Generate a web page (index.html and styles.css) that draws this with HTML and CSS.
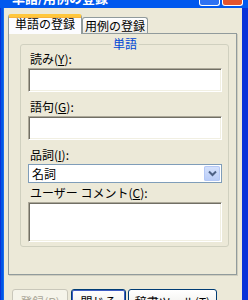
FILE: index.html
```html
<!DOCTYPE html>
<html lang="ja">
<head>
  <meta charset="UTF-8" />
  <title>単語/用例の登録</title>
  <link rel="stylesheet" href="styles.css">
</head>
<body>
  <div class="window">
    <div class="titlebar">
      <span class="title">単語/用例の登録</span>
      <span class="tb-btns"><span class="tb-btn"></span><span class="tb-btn tb-close"></span></span>
    </div>
    <div class="frame">
      <div class="client">
        <div class="tabs">
          <div class="tab active">単語の登録</div>
          <div class="tab">用例の登録</div>
        </div>
        <div class="panel">
          <fieldset class="group">
            <legend>単語</legend>
            <label class="first">読み(<u>Y</u>):</label>
            <div class="edit"></div>
            <label>語句(<u>G</u>):</label>
            <div class="edit"></div>
            <label>品詞(<u>I</u>):</label>
            <div class="combo">
              <span class="combo-text">名詞</span>
              <span class="combo-btn">
                <svg width="9" height="7" viewBox="0 0 9 7"><path d="M1 1.5 L4.5 5 L8 1.5" fill="none" stroke="#4D6185" stroke-width="2"/></svg>
              </span>
            </div>
            <label class="tight">ユーザー コメント(<u>C</u>):</label>
            <div class="edit memo"></div>
          </fieldset>
        </div>
        <div class="buttons">
          <button class="btn" disabled>登録(R)</button>
          <button class="btn default">閉じる</button>
          <button class="btn wide">辞書ツール(T)</button>
        </div>
      </div>
    </div>
  </div>
</body>
</html>
```

FILE: styles.css
```css
body {
  margin: 0;
  font-family: "Noto Sans CJK JP", sans-serif;
  font-size: 12px;
  color: #000;
}
.window { width: 248px; height: 300px; overflow: hidden; display: flex; flex-direction: column; background: #0055E5; }
.titlebar { height: 8px; flex: none; display: flex; justify-content: space-between; overflow: hidden; background: #0058EE; }
.title { color: #fff; font-weight: bold; font-size: 13px; line-height: 13px; margin-top: -9px; padding-left: 12px; white-space: nowrap; }
.tb-btns { display: flex; gap: 2px; padding-right: 5px; }
.tb-btn { width: 19px; height: 5px; border: 1px solid #fff; border-top: none; border-radius: 0 0 3px 3px; background: #2F72F2; }
.tb-close { background: #E2542F; }

.frame { flex: 1; display: flex; padding: 0 6px 0 4px; background: linear-gradient(to right, #0831D9 0, #0831D9 1px, #0055E5 1px, #0055E5 3px, #166AEE 3px, #166AEE 4px, #0055E5 4px, #0055E5 242px, #0831D9 242px); }
.client { flex: 1; background: #ECE9D8; padding: 6px 3px 0 4px; }

.tabs { display: flex; align-items: flex-end; height: 19px; position: relative; z-index: 1; }
.tab { box-sizing: border-box; text-align: center; white-space: nowrap; border: 1px solid #919B9C; border-bottom: none; border-radius: 3px 3px 0 0; }
.tab.active { width: 74px; height: 20px; margin-bottom: -1px; border-top: 3px solid #FFC73C; box-shadow: inset 0 1px #F8B33A; background: #FCFCFE; line-height: 13px; padding-top: 0; }
.tab:not(.active) { width: 66px; height: 16px; margin-left: 0; line-height: 13px; padding-top: 1px; background: linear-gradient(#FFFFFF, #ECEBE5); }

.panel { box-sizing: border-box; width: 229px; height: 242px; border: 1px solid #919B9C; box-shadow: 1px 1px 0 #D0CEBF; background: #ECE9D8; }

.group { margin: 4px 7px 0 11px; padding: 0 6px 4px 7px; border: 1px solid #D0D0BF; border-radius: 3px; }
.group legend { margin: 0 auto; padding: 0 2px; color: #0046D5; line-height: 12px; }
.group label { display: block; height: 13px; line-height: 13px; padding-left: 2px; margin-top: 8px; white-space: nowrap; }
.group label.first { margin-top: 2px; }
.group label.tight { margin-top: 3px; }

.edit { box-sizing: border-box; height: 24px; margin-top: 3px; background: #fff; border: 1px solid; border-color: #ACA899 #FFFFFF #FFFFFF #ACA899; box-shadow: inset 1px 1px #716F64, inset -1px -1px #F1EFE2; }
.edit.memo { height: 40px; }

.combo { box-sizing: border-box; height: 19px; margin-top: 3px; display: flex; justify-content: space-between; border: 1px solid #7F9DB9; background: #fff; }
.combo-text { padding-left: 3px; line-height: 17px; }
.combo-btn { width: 16px; height: 15px; margin: 1px 1px 0 0; display: flex; align-items: center; justify-content: center; border-radius: 2px; background: linear-gradient(#D6E2FC, #B8CCF8); box-shadow: inset 0 0 0 1px #B4C8F6; }

.buttons { display: flex; gap: 3px; margin: 14px 0 0 4px; }
.btn { box-sizing: border-box; width: 56px; height: 23px; padding: 2px 0 0; font: 12px/13px "Noto Sans CJK JP", sans-serif; white-space: nowrap; border: 1px solid #003C74; border-radius: 3px; background: linear-gradient(#FFFFFF, #ECEBE6); color: #000; }
.btn:disabled { border-color: #C9C7BA; color: #ACA899; background: #F5F4EA; }
.btn.default { width: 55px; box-shadow: inset 0 0 0 1px #3D5CC4; }
.btn.wide { width: 89px; margin-left: -1px; }
```
